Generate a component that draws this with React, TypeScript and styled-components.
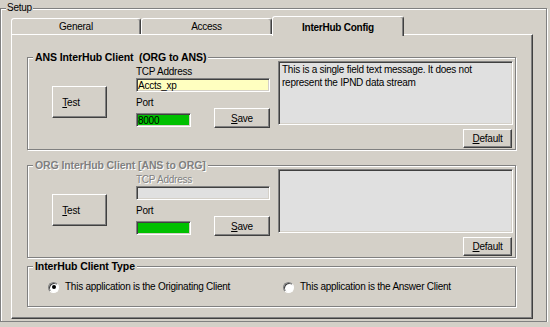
import React from "react";
import styled, { createGlobalStyle, css } from "styled-components";

const BG = "#d4d0c8";

const GlobalStyle = createGlobalStyle`
  html, body { margin: 0; padding: 0; background: ${BG}; }
  body {
    font-family: "Liberation Sans", Arial, sans-serif;
    font-size: 10px;
    letter-spacing: -0.25px;
    color: #000;
  }
  *, *::before, *::after { box-sizing: border-box; }
`;

const Setup = styled.fieldset`
  margin: 2px 0 0 0;
  width: 547px;
  height: 320px;
  min-width: 0;
  border: 1px solid #808080;
  box-shadow: inset 1px 1px 0 #fff, 1px 1px 0 #fff;
  padding: 2px 0 0 10px;
`;

const SetupLegend = styled.legend`
  margin-left: -5px;
  padding: 0 1px;
  line-height: 12px;
  background: ${BG};
`;

const TabStrip = styled.div`
  display: flex;
  align-items: flex-end;
  height: 18px;
  position: relative;
  z-index: 1;
`;

const Tab = styled.div<{ $active?: boolean; $w: number }>`
  width: ${(p) => p.$w}px;
  height: 16px;
  display: flex;
  align-items: center;
  justify-content: center;
  border: 1px solid;
  border-bottom: none;
  border-color: #fff #404040 transparent #fff;
  border-radius: 3px 3px 0 0;
  box-shadow: inset -1px 0 0 #808080;
  background: ${BG};
  ${(p) =>
    p.$active &&
    css`
      height: 20px;
      margin-bottom: -2px;
      padding-top: 1px;
      font-weight: bold;
    `}
`;

const TabPanel = styled.div`
  width: 522px;
  height: 285px;
  border: 1px solid;
  border-color: #fff #404040 #404040 #fff;
  box-shadow: inset -1px -1px 0 #808080;
  padding: 22px 0 0 15px;
  display: flex;
  flex-direction: column;
`;

const GroupBox = styled.div<{ $h: number; $gap?: number }>`
  position: relative;
  width: 489px;
  height: ${(p) => p.$h}px;
  margin-top: ${(p) => p.$gap ?? 0}px;
  border: 1px solid #808080;
  box-shadow: inset 1px 1px 0 #fff, 1px 1px 0 #fff;
`;

const GroupTitle = styled.span<{ $disabled?: boolean }>`
  position: absolute;
  top: -7px;
  left: 5px;
  padding: 0 2px;
  background: ${BG};
  font-weight: bold;
  font-size: 10.5px;
  line-height: 13px;
  letter-spacing: -0.1px;
  white-space: pre;
  color: ${(p) => (p.$disabled ? "#808080" : "#000")};
  text-shadow: ${(p) => (p.$disabled ? "1px 1px 0 #fff" : "none")};
`;

const ClientBody = styled.div`
  display: flex;
  align-items: flex-start;
  padding-left: 24px;
`;

const Button = styled.button<{ $w: number; $h: number; $shift?: number }>`
  width: ${(p) => p.$w}px;
  height: ${(p) => p.$h}px;
  padding: 0 ${(p) => p.$shift ?? 0}px 0 0;
  font: inherit;
  letter-spacing: inherit;
  color: #000;
  background: ${BG};
  border: 1px solid;
  border-color: #fff #404040 #404040 #fff;
  box-shadow: inset -1px -1px 0 #808080;
  flex-shrink: 0;
  u { text-decoration-thickness: 1px; text-underline-offset: 1px; }
`;

const TestButton = styled(Button)`
  margin-top: 28px;
`;

const FieldColumn = styled.div`
  width: 134px;
  margin-left: 29px;
  display: flex;
  flex-direction: column;
`;

const FieldLabel = styled.div<{ $top: number; $disabled?: boolean }>`
  line-height: 12px;
  margin-top: ${(p) => p.$top}px;
  color: ${(p) => (p.$disabled ? "#808080" : "#000")};
  text-shadow: ${(p) => (p.$disabled ? "1px 1px 0 #fff" : "none")};
`;

const sunken = css`
  border: 1px solid;
  border-color: #808080 #fff #fff #808080;
  box-shadow: inset 1px 1px 0 #404040, inset -1px -1px 0 ${BG};
`;

const Field = styled.input<{ $bg: string; $w: number }>`
  ${sunken};
  display: block;
  width: ${(p) => p.$w}px;
  height: 14px;
  padding: 0 1px;
  margin: 0;
  background: ${(p) => p.$bg};
  font: inherit;
  letter-spacing: inherit;
  color: #000;
  outline: none;
`;

const PortRow = styled.div`
  display: flex;
  justify-content: space-between;
  align-items: flex-end;
  margin-top: -1px;
`;

const PortField = styled(Field)`
  margin-bottom: 1px;
`;

const MessageColumn = styled.div`
  width: 235px;
  margin-left: 8px;
  display: flex;
  flex-direction: column;
  align-items: flex-end;
`;

const Memo = styled.textarea`
  ${sunken};
  display: block;
  width: 235px;
  height: 64px;
  margin: 3px 0 0 0;
  padding: 1px 3px;
  background: #e0e0e0;
  font: inherit;
  letter-spacing: inherit;
  line-height: 13px;
  color: #000;
  resize: none;
  overflow: hidden;
  outline: none;
`;

const DefaultButton = styled(Button)`
  margin: 4px 1px 0 0;
`;

const RadioRow = styled.div`
  display: grid;
  grid-template-columns: 235px auto;
  padding: 14px 0 0 20px;
`;

const RadioItem = styled.label`
  display: flex;
  align-items: center;
  gap: 6px;
  line-height: 12px;
  height: 12px;
`;

const RadioDot = styled.span<{ $checked?: boolean }>`
  position: relative;
  width: 11px;
  height: 11px;
  border-radius: 50%;
  border: 1px solid;
  border-color: #808080 #fff #fff #808080;
  box-shadow: inset 1px 1px 0 #404040;
  background: #fff;
  ${(p) =>
    p.$checked &&
    css`
      &::after {
        content: "";
        position: absolute;
        left: 2.5px;
        top: 2.5px;
        width: 4px;
        height: 4px;
        border-radius: 50%;
        background: #000;
      }
    `}
`;

type ClientProps = {
  title: string;
  gap?: number;
  disabled?: boolean;
  address: string;
  port: string;
  message: string;
};

function ClientGroup({ title, gap, disabled, address, port, message }: ClientProps) {
  return (
    <GroupBox $h={93} $gap={gap}>
      <GroupTitle $disabled={disabled}>{title}</GroupTitle>
      <ClientBody>
        <TestButton $w={55} $h={32} $shift={17}>
          <u>T</u>est
        </TestButton>
        <FieldColumn>
          <FieldLabel $top={8} $disabled={disabled}>
            TCP Address
          </FieldLabel>
          <Field
            $w={134}
            $bg={disabled ? "#e0e0e0" : "#ffffc0"}
            value={address}
            readOnly
            disabled={disabled}
          />
          <FieldLabel $top={5}>Port</FieldLabel>
          <PortRow>
            <PortField $w={55} $bg="#00c000" value={port} readOnly />
            <Button $w={56} $h={20}>
              <u>S</u>ave
            </Button>
          </PortRow>
        </FieldColumn>
        <MessageColumn>
          <Memo value={message} readOnly />
          <DefaultButton $w={49} $h={19}>
            <u>D</u>efault
          </DefaultButton>
        </MessageColumn>
      </ClientBody>
    </GroupBox>
  );
}

export default function App() {
  return (
    <>
      <GlobalStyle />
      <Setup>
        <SetupLegend>Setup</SetupLegend>
        <TabStrip>
          <Tab $w={130}>General</Tab>
          <Tab $w={131}>Access</Tab>
          <Tab $w={132} $active>
            InterHub Config
          </Tab>
        </TabStrip>
        <TabPanel>
          <ClientGroup
            title="ANS InterHub Client  (ORG to ANS)"
            address="Accts_xp"
            port="8000"
            message="This is a single field text message. It does not represent the IPND data stream"
          />
          <ClientGroup
            title="ORG InterHub Client [ANS to ORG]"
            gap={15}
            disabled
            address=""
            port=""
            message=""
          />
          <GroupBox $h={41} $gap={8}>
            <GroupTitle>InterHub Client Type</GroupTitle>
            <RadioRow>
              <RadioItem>
                <RadioDot $checked />
                This application is the Originating Client
              </RadioItem>
              <RadioItem>
                <RadioDot />
                This application is the Answer Client
              </RadioItem>
            </RadioRow>
          </GroupBox>
        </TabPanel>
      </Setup>
    </>
  );
}
